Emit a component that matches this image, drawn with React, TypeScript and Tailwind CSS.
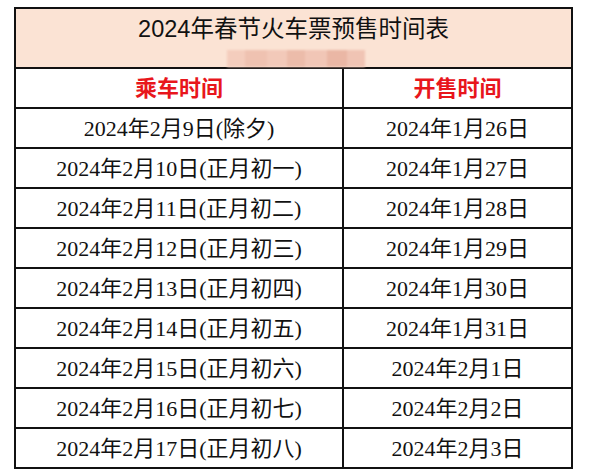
import React from 'react';

const ROWS: [string, string][] = [
  ['2024年2月9日(除夕)', '2024年1月26日'],
  ['2024年2月10日(正月初一)', '2024年1月27日'],
  ['2024年2月11日(正月初二)', '2024年1月28日'],
  ['2024年2月12日(正月初三)', '2024年1月29日'],
  ['2024年2月13日(正月初四)', '2024年1月30日'],
  ['2024年2月14日(正月初五)', '2024年1月31日'],
  ['2024年2月15日(正月初六)', '2024年2月1日'],
  ['2024年2月16日(正月初七)', '2024年2月2日'],
  ['2024年2月17日(正月初八)', '2024年2月3日'],
];

const serif = "font-['Liberation_Serif','Noto_Sans_CJK_SC',serif]";

export default function App() {
  return (
    <div className="w-[591px] h-[472px] bg-white pt-[7px] pl-[14px]">
      <div className="w-[559px] border-2 border-[#111]">
        {/* 标题 */}
        <div className="h-[58px] bg-[#fbe3d4] flex flex-col items-center">
          <div className="mt-[6px] text-[23.5px] leading-[28px] text-[#111] font-['Liberation_Sans','Noto_Sans_CJK_SC',sans-serif]">
            2024年春节火车票预售时间表
          </div>
          {/* 打码区域 */}
          <div className="mt-[7px] ml-[4px] flex h-[17px] w-[138px] blur-[1px]">
            <div className="w-[18px] bg-[#f4cdbd]" />
            <div className="w-[22px] bg-[#efc2b1]" />
            <div className="w-[20px] bg-[#f2c9b9]" />
            <div className="w-[18px] bg-[#ecbcaa]" />
            <div className="w-[22px] bg-[#f1c6b6]" />
            <div className="w-[20px] bg-[#eab7a5]" />
            <div className="w-[18px] bg-[#f0c4b4]" />
          </div>
        </div>

        {/* 表头 */}
        <div className="flex h-[40px] border-t-2 border-[#111]">
          <div className="w-[328px] border-r-2 border-[#111] flex items-center justify-center">
            <span className={`text-[22px] font-bold text-[#e8161c] ${serif}`}>乘车时间</span>
          </div>
          <div className="flex-1 flex items-center justify-center">
            <span className={`text-[22px] font-bold text-[#e8161c] ${serif}`}>开售时间</span>
          </div>
        </div>

        {ROWS.map(([ride, sale]) => (
          <div key={ride} className="flex h-[40px] border-t-2 border-[#111]">
            <div className="w-[328px] border-r-2 border-[#111] flex items-center justify-center">
              <span className={`text-[22px] text-[#111] ${serif}`}>{ride}</span>
            </div>
            <div className="flex-1 flex items-center justify-center">
              <span className={`text-[22px] text-[#111] ${serif}`}>{sale}</span>
            </div>
          </div>
        ))}
      </div>
    </div>
  );
}
